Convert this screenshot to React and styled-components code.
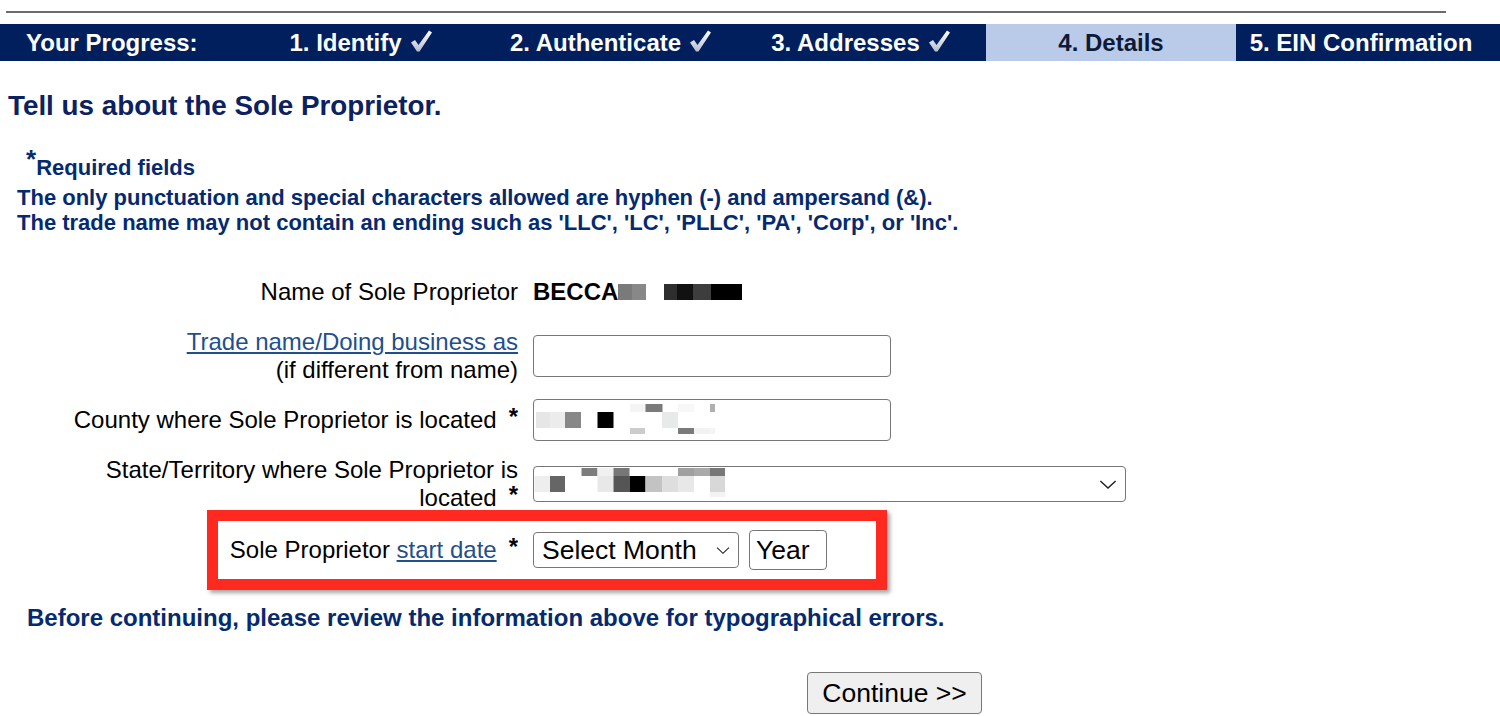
import React from "react";
import styled, { createGlobalStyle } from "styled-components";

const GlobalStyle = createGlobalStyle`
  body {
    margin: 0;
    background: #fff;
    font-family: "Liberation Sans", Arial, Helvetica, sans-serif;
  }
`;

const Page = styled.div`
  width: 1500px;
`;
const TopRule = styled.div`
  height: 2px;
  background: #6b6b6b;
  margin: 11px 54px 0 6px;
`;
const ProgressBar = styled.div`
  display: flex;
  margin-top: 11px;
  height: 37px;
  background: #001f5c;
  color: #fff;
  font-size: 24px;
  font-weight: bold;
  line-height: 37px;
  white-space: nowrap;
`;
const ProgressTitle = styled.div`
  width: 236px;
  padding-left: 26px;
  box-sizing: border-box;
`;
const Step = styled.div`
  width: 250px;
  text-align: center;
  background: ${(p) => (p.$active ? "#bacbea" : "transparent")};
  color: ${(p) => (p.$active ? "#0d1a38" : "#fff")};
`;
const CheckIcon = styled.svg`
  width: 24px;
  height: 24px;
  margin-left: 7px;
  vertical-align: -2px;
`;
const Heading = styled.h1`
  margin: 29px 0 0 8px;
  font-size: 27.8px;
  line-height: 32px;
  color: #0c2160;
`;
const Info = styled.div`
  margin: 32px 0 0 17px;
  color: #052a70;
  font-weight: bold;
  font-size: 22px;
`;
const RequiredLine = styled.div`
  padding-left: 9px;
  line-height: 28px;
`;
const Star = styled.span`
  font-size: 26px;
  line-height: 0;
  vertical-align: 7px;
`;
const Notes = styled.div`
  margin-top: 2.5px;
  line-height: 25px;
`;
const Form = styled.div`
  display: flex;
  flex-direction: column;
  gap: 15px;
  margin: 43.5px 0 0 58px;
`;
const Row = styled.div`
  display: flex;
  align-items: center;
  margin-bottom: ${(p) => p.$after || 0}px;
`;
const Label = styled.div`
  flex: none;
  width: ${(p) => p.$w || 460}px;
  margin-right: 15px;
  text-align: right;
  font-size: 24px;
  line-height: 28px;
  color: #000;
`;
const Req = styled.span`
  font-weight: bold;
  font-size: 24px;
  line-height: 0;
  vertical-align: 3px;
  margin-left: 12px;
`;
const HelpLink = styled.a`
  color: #1f4f8c;
  text-decoration: underline;
  text-underline-offset: 2px;
`;
const Value = styled.div`
  display: flex;
  align-items: center;
  font-size: 24px;
  font-weight: bold;
  line-height: 28px;
  color: #000;
`;
const Pixel = styled.span`
  display: inline-block;
  width: ${(p) => p.$w}px;
  height: 16px;
  margin-left: ${(p) => p.$gap || 0}px;
  background: ${(p) => p.$c};
`;
const TextInput = styled.input`
  box-sizing: border-box;
  width: ${(p) => p.$w}px;
  height: ${(p) => p.$h || 42}px;
  border: 1.5px solid #777;
  border-radius: 4px;
  padding: 0 6px;
  font: 26.5px "Liberation Sans", Arial, sans-serif;
  color: #000;
  background: #fff;
  &::placeholder {
    color: #000;
    opacity: 1;
  }
`;
const FieldBox = styled.div`
  box-sizing: border-box;
  display: flex;
  align-items: center;
  width: ${(p) => p.$w}px;
  height: ${(p) => p.$h}px;
  border: 1.5px solid #777;
  border-radius: 4px;
  background: #fff;
  overflow: hidden;
  font-size: 26.5px;
  color: #000;
  padding-right: ${(p) => p.$pr || 0}px;
`;
const SelectText = styled.span`
  flex: 1;
  padding-left: 8px;
  white-space: nowrap;
`;
const Mosaic = styled.svg`
  flex: none;
  align-self: flex-start;
`;
const Highlight = styled.div`
  display: flex;
  align-items: center;
  width: 658px;
  margin: -17px 0 0 149px;
  padding: 9px 0;
  border: 11px solid #ff2a1f;
  box-shadow: 3px 3px 4px rgba(0, 0, 0, 0.35);
`;
const Notice = styled.div`
  margin: 15px 0 0 27px;
  font-size: 24px;
  font-weight: bold;
  line-height: 26px;
  color: #052a70;
`;
const ContinueButton = styled.button`
  display: block;
  box-sizing: border-box;
  width: 175px;
  height: 42px;
  margin: 41px 0 0 807px;
  padding: 0;
  border: 1.5px solid #777;
  border-radius: 4px;
  background: #efefef;
  font: 26.5px "Liberation Sans", Arial, sans-serif;
  color: #000;
`;

const steps = [
  { name: "1. Identify", done: true },
  { name: "2. Authenticate", done: true },
  { name: "3. Addresses", done: true },
  { name: "4. Details", active: true },
  { name: "5. EIN Confirmation" },
];

// redaction mosaics: [x, y, w, h, colour]
const countyPixels = [
  [96, 4, 16, 8, "#f4f4f4"], [111.5, 4, 17, 8, "#7b7b7b"], [144, 4, 16, 8, "#f7f7f7"], [176, 4, 5, 8, "#b0b0b0"],
  [2, 12, 14, 16, "#e6e6e6"], [16, 12, 15, 16, "#ececec"], [31, 12, 16, 16, "#888"], [63.5, 12, 16, 16, "#000"],
  [128, 12, 16, 16, "#e8eaea"],
  [96, 28, 15, 6, "#ccc"], [144, 28, 16, 6, "#7b7b7b"], [160, 28, 16, 6, "#f2f2f2"], [176, 28, 5, 6, "#f5f5f5"],
];
const statePixels = [
  [47.5, 1, 16, 8, "#7d7d7d"], [63.5, 1, 16, 8, "#f0f0f0"], [79.5, 1, 16, 8, "#777"], [144, 1, 16, 8, "#a0a0a0"],
  [160, 1, 16, 8, "#aaa"], [176, 1, 15, 8, "#777"],
  [0.5, 9, 16, 16, "#eee"], [16, 9, 15, 16, "#666"], [63.5, 9, 16, 16, "#e8e8e8"], [79.5, 9, 16, 16, "#555"],
  [95.5, 9, 16, 16, "#000"], [111.5, 9, 17, 16, "#c3c3c3"], [128, 9, 16, 16, "#dedede"], [144, 9, 16, 16, "#e8e8e8"],
  [176, 9, 15, 16, "#d8d8d8"], [176, 25, 15, 5, "#f3f3f3"],
];

const Check = () => (
  <CheckIcon viewBox="0 0 24 24">
    <defs>
      <linearGradient id="chk" x1="0" y1="0" x2="0" y2="1">
        <stop offset="0" stopColor="#ffffff" />
        <stop offset="1" stopColor="#b4bccd" />
      </linearGradient>
    </defs>
    <path d="M2 13.5 L6 11 L9.5 16 L20 1.5 L23 3.5 L10.5 22.5 L8 22.5 Z" fill="url(#chk)" />
  </CheckIcon>
);

const Chevron = ({ size }) => (
  <svg width={size} height={size / 2 + 2} viewBox="0 0 20 11" style={{ flex: "none" }}>
    <path d="M1.5 1.5 L10 9.5 L18.5 1.5" fill="none" stroke="#222" strokeWidth="1.6" />
  </svg>
);

const PixelBlock = ({ cells, w, h }) => (
  <Mosaic width={w} height={h}>
    {cells.map(([x, y, cw, ch, c], i) => (
      <rect key={i} x={x} y={y} width={cw} height={ch} fill={c} />
    ))}
  </Mosaic>
);

const App = () => {
  return (
    <Page>
      <GlobalStyle />
      <TopRule />
      <ProgressBar>
        <ProgressTitle>Your Progress:</ProgressTitle>
        {steps.map((s) => (
          <Step key={s.name} $active={s.active}>
            {s.name}
            {s.done && <Check />}
          </Step>
        ))}
      </ProgressBar>

      <Heading>Tell us about the Sole Proprietor.</Heading>

      <Info>
        <RequiredLine>
          <Star>*</Star>Required fields
        </RequiredLine>
        <Notes>
          <div>The only punctuation and special characters allowed are hyphen (-) and ampersand (&amp;).</div>
          <div>The trade name may not contain an ending such as 'LLC', 'LC', 'PLLC', 'PA', 'Corp', or 'Inc'.</div>
        </Notes>
      </Info>

      <Form>
        <Row $after={7}>
          <Label>Name of Sole Proprietor</Label>
          <Value>
            BECCA
            <Pixel $w={14} $c="#7a7a7a" />
            <Pixel $w={14} $c="#888" />
            <Pixel $w={13} $gap={18} $c="#2e2e2e" />
            <Pixel $w={16} $c="#111" />
            <Pixel $w={18} $c="#3d3d3d" />
            <Pixel $w={31} $c="#000" />
          </Value>
        </Row>
        <Row>
          <Label>
            <HelpLink href="#">Trade name/Doing business as</HelpLink>
            <br />
            (if different from name)
          </Label>
          <TextInput $w={358} type="text" />
        </Row>
        <Row>
          <Label>
            County where Sole Proprietor is located<Req>*</Req>
          </Label>
          <FieldBox $w={358} $h={42}>
            <PixelBlock cells={countyPixels} w={200} h={36} />
          </FieldBox>
        </Row>
        <Row>
          <Label>
            State/Territory where Sole Proprietor is located<Req>*</Req>
          </Label>
          <FieldBox $w={593} $h={36} $pr={8}>
            <PixelBlock cells={statePixels} w={200} h={33} />
            <span style={{ flex: 1 }} />
            <Chevron size={18} />
          </FieldBox>
        </Row>
        <Highlight>
          <Label $w={300}>
            Sole Proprietor <HelpLink href="#">start date</HelpLink>
            <Req>*</Req>
          </Label>
          <FieldBox $w={206} $h={36} $pr={8}>
            <SelectText>Select Month</SelectText>
            <Chevron size={14} />
          </FieldBox>
          <TextInput $w={78} $h={40} placeholder="Year" style={{ marginLeft: 10 }} />
        </Highlight>
      </Form>

      <Notice>Before continuing, please review the information above for typographical errors.</Notice>

      <ContinueButton>Continue &gt;&gt;</ContinueButton>
    </Page>
  );
};

export default App;
